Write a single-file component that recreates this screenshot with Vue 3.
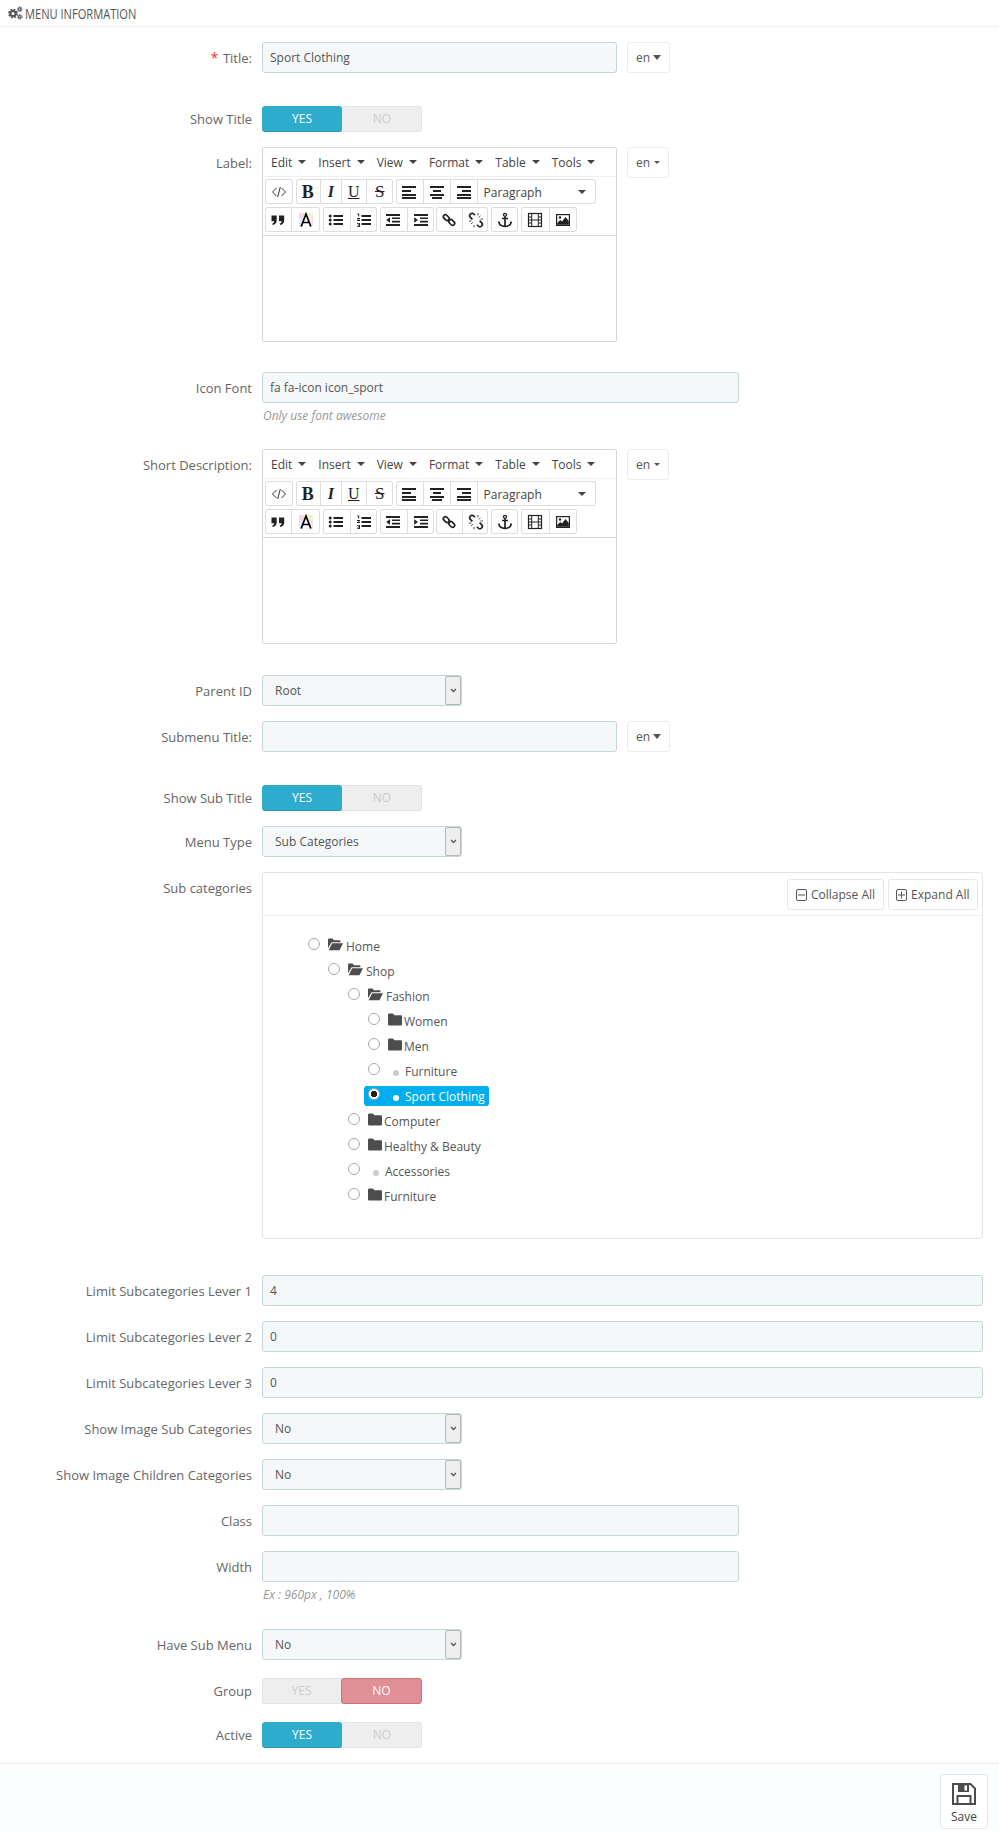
<script setup>
const menus = ['Edit', 'Insert', 'View', 'Format', 'Table', 'Tools']

const toolbar = [
  [
    [{ w: 28, i: 'code' }],
    [{ w: 24, t: 'B', c: 'tb' }, { w: 21, t: 'I', c: 'ti' }, { w: 25, t: 'U', c: 'tu' }, { w: 27, t: 'S', c: 'ts' }],
    [{ w: 27, i: 'left' }, { w: 27, i: 'center' }, { w: 27, i: 'right' }, { w: 119, para: true }]
  ],
  [
    [{ w: 26, i: 'quote' }, { w: 29, i: 'color' }],
    [{ w: 27, i: 'bull' }, { w: 27, i: 'num' }],
    [{ w: 27, i: 'outdent' }, { w: 27, i: 'indent' }],
    [{ w: 26, i: 'link' }, { w: 26, i: 'unlink' }],
    [{ w: 27, i: 'anchor' }],
    [{ w: 28, i: 'film' }, { w: 28, i: 'image' }]
  ]
]

const rows = [
  { label: 'Title:', req: true, type: 'input', value: 'Sport Clothing', size: 'md', en: 'big', mb: 33 },
  { label: 'Show Title', type: 'toggle', on: 'yes' },
  { label: 'Label:', type: 'editor', en: 'small', mb: 30 },
  { label: 'Icon Font', type: 'input', value: 'fa fa-icon icon_sport', size: 'lg', hint: 'Only use font awesome', mb: 25 },
  { label: 'Short Description:', type: 'editor', en: 'small', mb: 31 },
  { label: 'Parent ID', type: 'select', value: 'Root' },
  { label: 'Submenu Title:', type: 'input', value: '', size: 'md', en: 'big', mb: 33 },
  { label: 'Show Sub Title', type: 'toggle', on: 'yes' },
  { label: 'Menu Type', type: 'select', value: 'Sub Categories' },
  { label: 'Sub categories', type: 'tree', mb: 36 },
  { label: 'Limit Subcategories Lever 1', type: 'input', value: '4', size: 'full' },
  { label: 'Limit Subcategories Lever 2', type: 'input', value: '0', size: 'full' },
  { label: 'Limit Subcategories Lever 3', type: 'input', value: '0', size: 'full' },
  { label: 'Show Image Sub Categories', type: 'select', value: 'No' },
  { label: 'Show Image Children Categories', type: 'select', value: 'No' },
  { label: 'Class', type: 'input', value: '', size: 'lg' },
  { label: 'Width', type: 'input', value: '', size: 'lg', hint: 'Ex : 960px , 100%', mb: 26 },
  { label: 'Have Sub Menu', type: 'select', value: 'No', mb: 18 },
  { label: 'Group', type: 'toggle', on: 'no', mb: 18 },
  { label: 'Active', type: 'toggle', on: 'yes', mb: 15 }
]

const tree = [
  { t: 'Home', l: 0, k: 'open' },
  { t: 'Shop', l: 1, k: 'open' },
  { t: 'Fashion', l: 2, k: 'open' },
  { t: 'Women', l: 3, k: 'closed' },
  { t: 'Men', l: 3, k: 'closed' },
  { t: 'Furniture', l: 3, k: 'leaf' },
  { t: 'Sport Clothing', l: 3, k: 'leaf', picked: true },
  { t: 'Computer', l: 2, k: 'closed' },
  { t: 'Healthy & Beauty', l: 2, k: 'closed' },
  { t: 'Accessories', l: 2, k: 'leaf' },
  { t: 'Furniture', l: 2, k: 'closed' }
]
</script>

<template>
  <div class="page">
    <header class="head">
      <svg class="cogs" viewBox="0 0 16 14" width="16" height="14">
        <g fill="none" stroke="#555">
          <circle cx="6" cy="7.5" r="2.6" stroke-width="2" />
          <circle cx="6" cy="7.5" r="4" stroke-width="1.8" stroke-dasharray="1.9 1.24" />
          <circle cx="12.8" cy="3.2" r="1.3" stroke-width="1.2" />
          <circle cx="12.8" cy="3.2" r="2.3" stroke-width="1" stroke-dasharray="1.1 0.7" />
          <circle cx="12.8" cy="10.8" r="1.3" stroke-width="1.2" />
          <circle cx="12.8" cy="10.8" r="2.3" stroke-width="1" stroke-dasharray="1.1 0.7" />
        </g>
      </svg>
      <span class="head-title">MENU INFORMATION</span>
    </header>

    <main class="form">
      <div
        v-for="r in rows"
        :key="r.label"
        class="row"
        :style="{ marginBottom: (r.mb || 15) + 'px' }"
      >
        <div class="lab" :class="{ 'lab-toggle': r.type === 'toggle' }">
          <span v-if="r.req" class="req">*</span>
          {{ r.label }}
        </div>

        <div class="field">
          <template v-if="r.type === 'input'">
            <div class="inp" :class="r.size">{{ r.value }}</div>
            <div v-if="r.hint" class="hint">{{ r.hint }}</div>
          </template>

          <div v-else-if="r.type === 'select'" class="sel">
            <span>{{ r.value }}</span>
            <span class="sel-btn">
              <svg viewBox="0 0 8 6" width="7" height="5"><path d="M1 1.2l3 3 3-3" fill="none" stroke="#555" stroke-width="1.5" /></svg>
            </span>
          </div>

          <div v-else-if="r.type === 'toggle'" class="tog">
            <span class="tog-i" :class="{ yes: r.on === 'yes' }">YES</span>
            <span class="tog-i" :class="{ no: r.on === 'no' }">NO</span>
          </div>

          <div v-else-if="r.type === 'editor'" class="ed">
            <div class="ed-menu">
              <span v-for="m in menus" :key="m" class="ed-m">{{ m }}<i class="mini-caret"></i></span>
            </div>
            <div class="ed-tools">
              <div v-for="(line, li) in toolbar" :key="li" class="ed-line">
                <div v-for="(g, gi) in line" :key="gi" class="ed-group">
                  <div
                    v-for="(b, bi) in g"
                    :key="bi"
                    class="ed-btn"
                    :class="{ para: b.para }"
                    :style="{ width: b.w + 'px' }"
                  >
                    <span v-if="b.t" :class="b.c">{{ b.t }}</span>
                    <template v-else-if="b.para">
                      <span>Paragraph</span><i class="mini-caret"></i>
                    </template>
                    <svg v-else viewBox="0 0 16 16" width="16" height="16" class="ico">
                      <path v-if="b.i === 'code'" d="M5.5 4L1.5 8l4 4M10.500 4l4 4-4 4M9.300 3L6.700 13" fill="none" stroke="#333" stroke-width="1" />
                      <path v-else-if="b.i === 'left'" d="M1 2h14v2H1zM1 6h9v2H1zM1 10h14v2H1zM1 13h14v2H1z" fill="#222" />
                      <path v-else-if="b.i === 'center'" d="M1 2h14v2H1zM4 6h8v2H4zM1 10h14v2H1zM3 13h10v2H3z" fill="#222" />
                      <path v-else-if="b.i === 'right'" d="M1 2h14v2H1zM6 6h9v2H6zM1 10h14v2H1zM1 13h14v2H1z" fill="#222" />
                      <path v-else-if="b.i === 'quote'" d="M1.500 3.500h5.200v5c0 2.600-1.700 4-3.900 4.600l-.6-1.400c1.200-.5 2-1.200 2-2.400H1.500zM9 3.500h5.200v5c0 2.600-1.700 4-3.900 4.600l-.6-1.400c1.200-.5 2-1.200 2-2.400H9z" fill="#222" />
                      <g v-else-if="b.i === 'color'">
                        <rect x="1" y="1" width="5" height="5" fill="#fbd9dc" />
                        <rect x="6" y="1" width="5" height="5" fill="#fdf3c8" />
                        <rect x="11" y="1" width="4" height="5" fill="#e2f6d8" />
                        <rect x="1" y="6" width="4" height="9" fill="#d8ecfb" />
                        <rect x="11" y="6" width="4" height="9" fill="#fde2ef" />
                        <path d="M3.200 14.500L8 2l4.800 12.500M5 10.500h6" fill="none" stroke="#000" stroke-width="1.7" />
                      </g>
                      <g v-else-if="b.i === 'bull'" fill="#222">
                        <circle cx="2.200" cy="4" r="1.500" /><circle cx="2.200" cy="8" r="1.500" /><circle cx="2.200" cy="12" r="1.500" />
                        <path d="M5.500 3h9.500v2H5.500zM5.500 7h9.500v2H5.500zM5.500 11h9.500v2H5.500z" />
                      </g>
                      <g v-else-if="b.i === 'num'" fill="#222">
                        <path d="M1.200 1.500h2v3h-1v-2h-1zM1 6h3v1l-2 1h2v1H1V8l2-1H1zM1 11h3v4H1v-.8h2v-.8H1.600v-.8H3v-.8H1z" />
                        <path d="M5.500 3h9.500v2H5.500zM5.500 7h9.500v2H5.500zM5.500 11h9.500v2H5.500z" />
                      </g>
                      <path v-else-if="b.i === 'outdent'" d="M1 2h14v2H1zM7 5.500h8v1.600H7zM7 8.800h8v1.600H7zM1 12h14v2H1zM5 5.200v5.600L1.200 8z" fill="#222" />
                      <path v-else-if="b.i === 'indent'" d="M1 2h14v2H1zM7 5.500h8v1.600H7zM7 8.800h8v1.600H7zM1 12h14v2H1zM1.200 5.200v5.600L5 8z" fill="#222" />
                      <g v-else-if="b.i === 'link'" fill="none" stroke="#222" stroke-width="1.700">
                        <rect x="2" y="3.500" width="6.500" height="4" rx="2" transform="rotate(45 5.200 5.500)" />
                        <rect x="7.500" y="8.500" width="6.500" height="4" rx="2" transform="rotate(45 10.800 10.500)" />
                      </g>
                      <g v-else-if="b.i === 'unlink'" fill="none" stroke="#222">
                        <path d="M7 3.200L5.800 2a2.400 2.400 0 0 0-3.400 3.400l2 2M9 12.800l1.200 1.200a2.400 2.400 0 0 0 3.400-3.400l-2-2" stroke-width="1.700" />
                        <path d="M1 9h2.500M3 12l1.800-1.600M6 13v2.400M10 1v2.400M12.500 3.700l-1.600 1.700M12.500 7H15" stroke-width=".8" />
                      </g>
                      <g v-else-if="b.i === 'anchor'" fill="none" stroke="#222">
                        <circle cx="8" cy="2.800" r="1.500" stroke-width="1.300" />
                        <path d="M8 4.500v10M5 6.500h6" stroke-width="1.700" />
                        <path d="M1.800 9.500c.3 3.300 3 4.900 6.200 4.900s5.900-1.600 6.200-4.900" stroke-width="1.700" />
                      </g>
                      <g v-else-if="b.i === 'film'" fill="none" stroke="#222">
                        <rect x="1.500" y="1.500" width="13" height="13" stroke-width="1.200" />
                        <path d="M4.700 1.500v13M11.300 1.500v13M4.700 8h6.600M1.500 5h3.200M1.500 8h3.200M1.500 11h3.200M11.300 5h3.200M11.300 8h3.200M11.300 11h3.200" stroke-width="1" />
                      </g>
                      <g v-else-if="b.i === 'image'">
                        <rect x="1" y="2" width="14" height="12" fill="#222" />
                        <rect x="2.200" y="3.200" width="11.600" height="9.600" fill="#fff" />
                        <path d="M2.200 12.800V11l3-3 1.800 1.600L10.500 5l3.300 4v3.800z" fill="#222" />
                        <circle cx="5" cy="5.500" r="1.200" fill="#222" />
                      </g>
                    </svg>
                  </div>
                </div>
              </div>
            </div>
            <div class="ed-body"></div>
          </div>

          <div v-else-if="r.type === 'tree'" class="panel">
            <div class="panel-head">
              <div class="tree-btn">
                <svg viewBox="0 0 11 12" width="11" height="12"><rect x=".5" y=".5" width="10" height="11" rx="1.5" fill="none" stroke="#555" /><path d="M2 6h7" stroke="#555" /></svg>
                Collapse All
              </div>
              <div class="tree-btn">
                <svg viewBox="0 0 11 12" width="11" height="12"><rect x=".5" y=".5" width="10" height="11" rx="1.5" fill="none" stroke="#555" /><path d="M2 6h7M5.500 2.500v7" stroke="#555" /></svg>
                Expand All
              </div>
            </div>
            <div class="tree">
              <div v-for="n in tree" :key="n.t + n.l" class="tree-row" :style="{ paddingLeft: (41 + n.l * 20) + 'px' }">
                <span class="node" :class="{ picked: n.picked }">
                  <i class="radio" :class="{ checked: n.picked }"></i>
                  <svg v-if="n.k === 'open'" class="folder open" viewBox="0 0 16 13" width="15" height="13">
                    <path d="M0 1.500C0 .7.5.2 1.200.2h3.600L6.300 2h6c.6 0 1 .4 1 1v1.200H3.800L0 10.500z" fill="#4d4d4d" />
                    <path d="M4.400 5.200H16L12.300 12.500H.7z" fill="#4d4d4d" />
                  </svg>
                  <svg v-else-if="n.k === 'closed'" class="folder closed" viewBox="0 0 14 13" width="14" height="13">
                    <path d="M0 2C0 1 .6.500 1.500.500h3.300L6.500 2.300h6.200c.8 0 1.300.5 1.300 1.300V11c0 1-.6 1.500-1.500 1.500h-11C.6 12.500 0 12 0 11z" fill="#4d4d4d" />
                  </svg>
                  <i v-else class="dot"></i>
                  <span class="node-t">{{ n.t }}</span>
                </span>
              </div>
            </div>
          </div>
        </div>

        <div v-if="r.en" class="en" :class="r.en">en<i class="en-caret"></i></div>
      </div>
    </main>

    <footer class="foot">
      <div class="save">
        <svg viewBox="0 0 24 22" width="24" height="22">
          <path d="M1 1h17.500L23 5.500V21H1z" fill="none" stroke="#4d4d4d" stroke-width="2" />
          <path d="M6 1h11v8H6z" fill="#4d4d4d" />
          <path d="M12.500 2.500h2.500v5h-2.500z" fill="#fff" />
          <path d="M5.500 13h13v8h-13z" fill="#fff" stroke="#4d4d4d" stroke-width="2" />
        </svg>
        <span>Save</span>
      </div>
    </footer>
  </div>
</template>

<style>
html, body { margin: 0; background: #fff; }
</style>

<style scoped>
.page {
  width: 999px;
  height: 1831px;
  overflow: hidden;
  font-family: "Open Sans", "Liberation Sans", sans-serif;
  font-size: 12px;
  color: #666;
  display: flex;
  flex-direction: column;
}
.head {
  height: 26px;
  border-bottom: 1px solid #f2f2f2;
  display: flex;
  align-items: center;
  padding-left: 7px;
  flex: none;
}
.cogs { flex: none; margin-right: 2px; }
.head-title {
  font-size: 15px;
  color: #555;
  white-space: nowrap;
  transform: scaleX(0.74);
  transform-origin: left center;
}
.form { padding-top: 15px; flex: 1; }
.row { display: flex; align-items: flex-start; }
.lab {
  width: 252px;
  flex: none;
  text-align: right;
  margin-right: 10px;
  padding-top: 7px;
  font-size: 13px;
  line-height: 18px;
  color: #666;
  white-space: nowrap;
}
.lab-toggle { padding-top: 4px; }
.req { color: #e33; font-size: 14px; margin-right: 1px; }
.inp, .sel {
  box-sizing: border-box;
  height: 31px;
  background: #f5f8f9;
  border: 1px solid #c7d6db;
  border-radius: 3px;
  line-height: 29px;
  color: #555;
}
.inp { padding: 0 7px; }
.md { width: 355px; }
.lg { width: 477px; }
.full { width: 721px; }
.hint {
  margin-top: 4px;
  font-style: italic;
  font-size: 12px;
  line-height: 17px;
  color: #999;
  padding-left: 1px;
}
.sel {
  width: 200px;
  display: flex;
  justify-content: space-between;
  padding-left: 12px;
}
.sel-btn {
  box-sizing: border-box;
  width: 16px;
  height: 29px;
  background: #eee;
  border: 1px solid #b8b8b8;
  border-radius: 2px;
  display: flex;
  align-items: center;
  justify-content: center;
}
.tog {
  display: flex;
  width: 160px;
  height: 26px;
  border-radius: 3px;
  overflow: hidden;
  background: #eee;
  box-shadow: inset 0 0 0 1px #e4e4e4;
}
.tog-i {
  flex: 1;
  text-align: center;
  line-height: 26px;
  color: #ccc;
}
.tog-i.yes { background: #2eacce; color: #fff; border-bottom: 1px solid #2a97b5; border-radius: 3px; line-height: 25px; }
.tog-i.no { background: #e08f95; color: #fff; border: 1px solid #cf7077; border-radius: 3px; line-height: 24px; }
.en {
  box-sizing: border-box;
  margin-left: 10px;
  height: 31px;
  background: #fff;
  border: 1px solid #eaedef;
  border-radius: 3px;
  line-height: 29px;
  color: #555;
  display: flex;
  align-items: center;
  justify-content: center;
  gap: 3px;
}
.en.big { width: 43px; }
.en.small { width: 42px; }
.en-caret {
  width: 0;
  height: 0;
  border-left: 4px solid transparent;
  border-right: 4px solid transparent;
  border-top: 5px solid #555;
}
.en.small .en-caret { border-left-width: 3px; border-right-width: 3px; border-top-width: 3px; margin-left: 1px; }
.ed {
  box-sizing: border-box;
  width: 355px;
  height: 195px;
  border: 1px solid #d4d8da;
  border-radius: 2px;
  display: flex;
  flex-direction: column;
}
.ed-menu {
  height: 28px;
  border-bottom: 1px solid #eef0f1;
  display: flex;
  align-items: center;
  padding-left: 8px;
  gap: 12px;
  color: #444;
  flex: none;
}
.ed-m { display: inline-flex; align-items: center; white-space: nowrap; }
.mini-caret {
  display: inline-block;
  width: 0;
  height: 0;
  margin-left: 6px;
  border-left: 4px solid transparent;
  border-right: 4px solid transparent;
  border-top: 4px solid #444;
}
.ed-tools {
  padding: 2px 2px 3px;
  border-bottom: 1px solid #d4d8da;
  flex: none;
}
.ed-line { display: flex; gap: 2.75px; }
.ed-line + .ed-line { margin-top: 3px; }
.ed-group {
  display: flex;
  box-shadow: inset 0 0 0 1px #ddd;
  border-radius: 3px;
  height: 25px;
}
.ed-btn {
  box-sizing: border-box;
  display: flex;
  align-items: center;
  justify-content: center;
  color: #222;
}
.ed-btn + .ed-btn { border-left: 1px solid #ddd; }
.ed-btn.para {
  justify-content: space-between;
  padding: 1px 10px 0 6px;
  color: #444;
}
.ico { display: block; flex: none; }
.tb, .ti, .tu, .ts {
  font-family: "Liberation Serif", serif;
  font-size: 16px;
  line-height: 16px;
  color: #222;
}
.tb { font-weight: 700; font-size: 18px; }
.ti { font-style: italic; font-weight: 700; }
.tu { text-decoration: underline; }
.ts { text-decoration: line-through; font-size: 17px; }
.ed-body { flex: 1; }
.panel {
  box-sizing: border-box;
  width: 721px;
  height: 367px;
  border: 1px solid #e1e4e6;
  border-radius: 4px;
}
.panel-head {
  box-sizing: border-box;
  height: 43px;
  border-bottom: 1px solid #eee;
  display: flex;
  justify-content: flex-end;
  gap: 4px;
  padding: 6px 4px 0 0;
}
.tree-btn {
  box-sizing: border-box;
  height: 31px;
  padding: 0 7.5px;
  border: 1px solid #e6e8ea;
  border-radius: 3px;
  display: flex;
  align-items: center;
  gap: 4px;
  color: #555;
  white-space: nowrap;
}
.tree { padding-top: 19px; }
.tree-row { height: 25px; display: flex; }
.node {
  box-sizing: border-box;
  height: 20px;
  margin-top: 1px;
  padding: 0 4px;
  border-radius: 3px;
  display: inline-flex;
  align-items: flex-start;
  color: #555;
}
.node.picked { background: #00aeef; color: #fff; }
.radio {
  box-sizing: border-box;
  width: 12px;
  height: 12px;
  margin-top: 2px;
  border: 1px solid #aaa;
  border-radius: 50%;
  background: #fff;
  flex: none;
}
.radio.checked { background: radial-gradient(circle, #222 0 3px, #fff 3.500px); }
.folder { flex: none; margin-top: 2px; }
.folder.open { margin-left: 8px; margin-right: 3px; }
.folder.closed { margin-left: 8px; margin-right: 2px; }
.dot {
  width: 6px;
  height: 6px;
  border-radius: 50%;
  background: #ccc;
  margin: 9px 6px 0 13px;
  flex: none;
}
.picked .dot { background: #fff; }
.node-t { line-height: 20px; padding-top: 1px; white-space: nowrap; }
.foot {
  flex: none;
  height: 68px;
  border-top: 1px solid #eee;
  background: #fcfdfe;
  display: flex;
  justify-content: flex-end;
  padding: 10px 11px 0 0;
  box-sizing: content-box;
}
.save {
  box-sizing: border-box;
  width: 48px;
  height: 55px;
  border: 1px solid #e6e8ea;
  border-radius: 3px;
  background: #fff;
  display: flex;
  flex-direction: column;
  align-items: center;
  padding-top: 8px;
  color: #444;
}
.save span { line-height: 18px; margin-top: 3px; }
</style>
